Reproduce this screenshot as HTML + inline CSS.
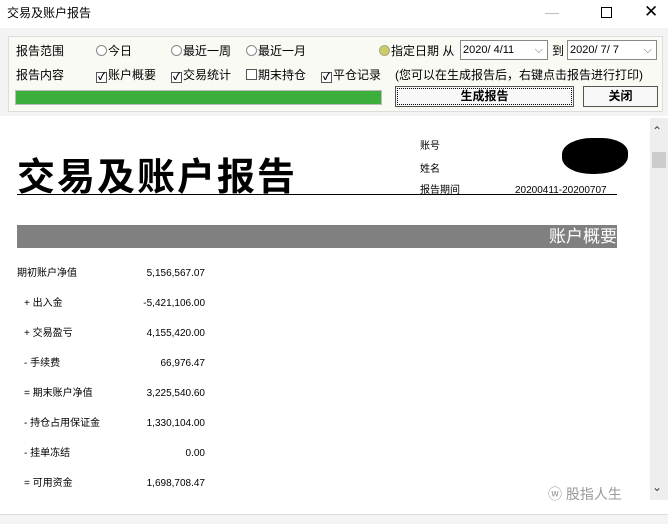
<!DOCTYPE html>
<html><head><meta charset="utf-8"><style>
*{margin:0;padding:0;box-sizing:border-box}
body{width:668px;height:524px;overflow:hidden;background:#fff;font-family:"Liberation Sans","Noto Sans CJK SC",sans-serif;position:relative;color:#000}
.a{position:absolute;white-space:nowrap}
.s{font-size:12px;line-height:16px}
.rb{display:inline-block;width:11px;height:11px;border:1px solid #888;border-radius:50%;vertical-align:-1px;margin-right:1px;background:#fff}
.cb{display:inline-block;width:11px;height:11px;border:1px solid #555;vertical-align:-1px;margin-right:1px;background:#fff;font-size:10px;line-height:9px;text-align:center;font-weight:bold}
.sel{border:1px solid #888;background:#fff;font-size:11px;height:20px;line-height:18px;padding-left:2px}
.l{font-size:10px;line-height:14px}
.v{font-size:10px;line-height:14px;text-align:right;width:120px}
</style></head><body>
<div class="a s" style="left:7px;top:5px">交易及账户报告</div>
<div class="a" style="left:545px;top:4px;color:#bbb;font-size:14px">—</div>
<div class="a" style="left:601px;top:7px;width:11px;height:11px;border:1px solid #000"></div>
<div class="a" style="left:644px;top:2px;font-size:17px">✕</div>
<div class="a" style="left:0;top:28px;width:668px;height:88px;background:#f3f3f3"></div>
<div class="a" style="left:8px;top:36px;width:655px;height:76px;border:1px solid #ddd;background:#fafaf5"></div>
<div class="a s" style="left:16px;top:43px">报告范围</div>
<div class="a s" style="left:96px;top:43px"><span class="rb"></span>今日</div>
<div class="a s" style="left:171px;top:43px"><span class="rb"></span>最近一周</div>
<div class="a s" style="left:246px;top:43px"><span class="rb"></span>最近一月</div>
<div class="a s" style="left:379px;top:43px"><span class="rb" style="background:#cc6;border-color:#aa8"></span>指定日期 从</div>
<div class="a sel" style="left:460px;top:40px;width:88px">2020/ 4/11 <span style="position:absolute;right:4px;color:#666">⌵</span></div>
<div class="a s" style="left:552px;top:43px">到</div>
<div class="a sel" style="left:567px;top:40px;width:90px">2020/ 7/ 7 <span style="position:absolute;right:4px;color:#666">⌵</span></div>
<div class="a s" style="left:16px;top:67px">报告内容</div>
<div class="a s" style="left:96px;top:67px"><span class="cb">✓</span>账户概要</div>
<div class="a s" style="left:171px;top:67px"><span class="cb">✓</span>交易统计</div>
<div class="a s" style="left:246px;top:67px"><span class="cb"></span>期末持仓</div>
<div class="a s" style="left:321px;top:67px"><span class="cb">✓</span>平仓记录</div>
<div class="a s" style="left:395px;top:67px">(您可以在生成报告后，右键点击报告进行打印)</div>
<div class="a" style="left:15px;top:90px;width:367px;height:15px;background:#3cae3c;border:1px solid #bbb"></div>
<div class="a s" style="left:395px;top:86px;width:179px;height:21px;border:1px solid #555;background:#f8f8f8;text-align:center;line-height:19px;font-weight:bold;outline:1px dotted #000;outline-offset:-3px">生成报告</div>
<div class="a s" style="left:583px;top:86px;width:75px;height:21px;border:1px solid #555;background:#f8f8f8;text-align:center;line-height:19px;font-weight:bold">关闭</div>
<div class="a" style="left:650px;top:118px;width:18px;height:382px;background:#eee"></div>
<div class="a" style="left:652px;top:124px;font-size:12px;color:#444">⌃</div>
<div class="a" style="left:652px;top:152px;width:14px;height:16px;background:#ccc"></div>
<div class="a" style="left:652px;top:480px;font-size:12px;color:#444">⌄</div>
<div class="a" style="left:17px;top:153px;font-size:38px;line-height:50px;font-weight:bold;letter-spacing:2px">交易及账户报告</div>
<div class="a" style="left:17px;top:194px;width:600px;height:1px;background:#000"></div>
<div class="a l" style="left:420px;top:140px">账号</div>
<div class="a l" style="left:420px;top:163px">姓名</div>
<div class="a l" style="left:420px;top:184px">报告期间</div>
<div class="a l" style="left:515px;top:184px">20200411-20200707</div>
<div class="a" style="left:562px;top:138px;width:66px;height:36px;background:#000;border-radius:45% 40% 50% 45%"></div>
<div class="a" style="left:17px;top:225px;width:600px;height:23px;background:#808080"></div>
<div class="a" style="left:540px;top:226px;width:77px;text-align:right;color:#fff;font-size:17px;line-height:22px">账户概要</div>
<div class="a l" style="left:17px;top:267px">期初账户净值</div><div class="a v" style="left:85px;top:267px">5,156,567.07</div>
<div class="a l" style="left:24px;top:297px">+ 出入金</div><div class="a v" style="left:85px;top:297px">-5,421,106.00</div>
<div class="a l" style="left:24px;top:327px">+ 交易盈亏</div><div class="a v" style="left:85px;top:327px">4,155,420.00</div>
<div class="a l" style="left:24px;top:357px">- 手续费</div><div class="a v" style="left:85px;top:357px">66,976.47</div>
<div class="a l" style="left:24px;top:387px">= 期末账户净值</div><div class="a v" style="left:85px;top:387px">3,225,540.60</div>
<div class="a l" style="left:24px;top:417px">- 持仓占用保证金</div><div class="a v" style="left:85px;top:417px">1,330,104.00</div>
<div class="a l" style="left:24px;top:447px">- 挂单冻结</div><div class="a v" style="left:85px;top:447px">0.00</div>
<div class="a l" style="left:24px;top:477px">= 可用资金</div><div class="a v" style="left:85px;top:477px">1,698,708.47</div>
<div class="a" style="left:548px;top:484px;font-size:14px;color:#999">ⓦ 股指人生</div>
<div class="a" style="left:0;top:514px;width:668px;height:10px;background:#f4f4f4;border-top:1px solid #ddd"></div>
</body></html>
